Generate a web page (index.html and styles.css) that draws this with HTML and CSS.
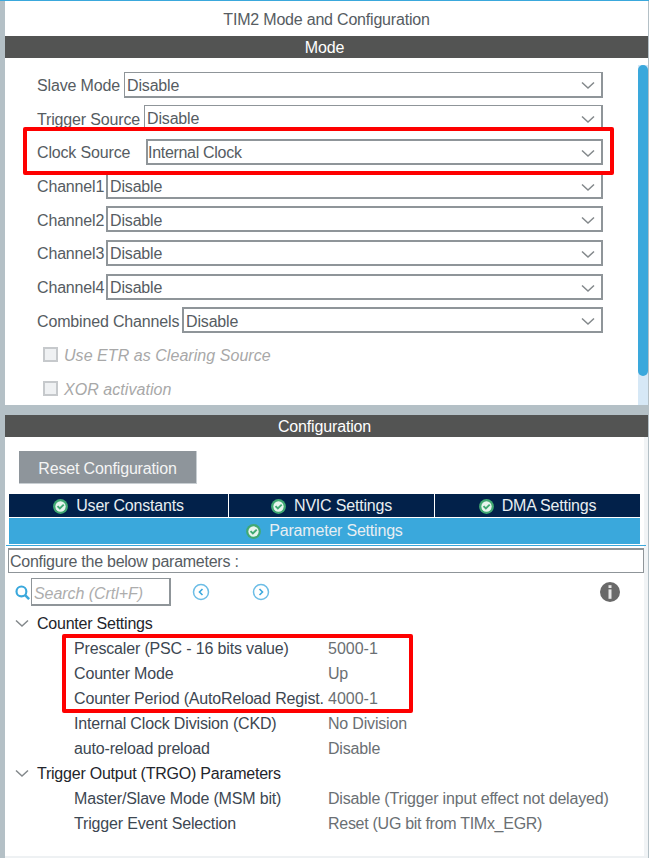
FILE: index.html
```html
<!DOCTYPE html>
<html lang="en">
<head>
    <meta charset="UTF-8">
    <meta name="viewport" content="width=device-width, initial-scale=1.0">
    <title>TIM2 Mode and Configuration</title>
    <link rel="stylesheet" href="styles.css">
</head>
<body>
    <svg class="icon-defs" width="0" height="0">
        <symbol id="chevron" viewBox="0 0 14 9">
            <polyline points="1,1.5 7,7 13,1.5" fill="none" stroke="#83888b" stroke-width="1.5"></polyline>
        </symbol>
        <symbol id="check" viewBox="0 0 14 14">
            <circle cx="7" cy="7" r="6.9" fill="#41a973"></circle>
            <circle cx="7" cy="7" r="4.8" fill="#e8f5ee"></circle>
            <polyline points="4.2,6.6 6.4,8.8 10,5.2" fill="none" stroke="#41a973" stroke-width="1.8"></polyline>
        </symbol>
    </svg>

    <div class="window">
        <!-- Mode -->
        <section class="mode-panel">
            <div class="title">TIM2 Mode and Configuration</div>
            <div class="bar">Mode</div>
            <div class="mode-body">
                <div class="mode-form">
                    <div class="field field-slave">
                        <label>Slave Mode</label>
                        <div class="select"><span>Disable</span><svg class="chevron"><use href="#chevron"></use></svg></div>
                    </div>
                    <div class="field field-trigger">
                        <label>Trigger Source</label>
                        <div class="select"><span>Disable</span><svg class="chevron"><use href="#chevron"></use></svg></div>
                    </div>
                    <div class="field field-clock">
                        <label>Clock Source</label>
                        <div class="select"><span>Internal Clock</span><svg class="chevron"><use href="#chevron"></use></svg></div>
                    </div>
                    <div class="field field-channel">
                        <label>Channel1</label>
                        <div class="select"><span>Disable</span><svg class="chevron"><use href="#chevron"></use></svg></div>
                    </div>
                    <div class="field field-channel">
                        <label>Channel2</label>
                        <div class="select"><span>Disable</span><svg class="chevron"><use href="#chevron"></use></svg></div>
                    </div>
                    <div class="field field-channel">
                        <label>Channel3</label>
                        <div class="select"><span>Disable</span><svg class="chevron"><use href="#chevron"></use></svg></div>
                    </div>
                    <div class="field field-channel">
                        <label>Channel4</label>
                        <div class="select"><span>Disable</span><svg class="chevron"><use href="#chevron"></use></svg></div>
                    </div>
                    <div class="field field-combined">
                        <label>Combined Channels</label>
                        <div class="select"><span>Disable</span><svg class="chevron"><use href="#chevron"></use></svg></div>
                    </div>
                    <div class="options">
                        <div class="option"><span class="checkbox"></span>Use ETR as Clearing Source</div>
                        <div class="option"><span class="checkbox"></span>XOR activation</div>
                    </div>
                </div>
                <div class="scrollbar"><div class="scroll-thumb"></div></div>
            </div>
        </section>

        <!-- Configuration -->
        <section class="config-panel">
            <div class="bar">Configuration</div>
            <button class="reset-btn">Reset Configuration</button>

            <div class="tabs">
                <div class="tab"><svg class="check"><use href="#check"></use></svg>User Constants</div>
                <div class="tab tab-nvic"><svg class="check"><use href="#check"></use></svg>NVIC Settings</div>
                <div class="tab tab-dma"><svg class="check"><use href="#check"></use></svg>DMA Settings</div>
                <div class="tab tab-active"><svg class="check"><use href="#check"></use></svg>Parameter Settings</div>
            </div>
            <div class="tab-rule"></div>

            <div class="hint">Configure the below parameters :</div>

            <div class="toolbar">
                <svg class="search-icon" viewBox="0 0 14 14">
                    <circle cx="6" cy="6" r="4.6" fill="none" stroke="#3aa8dc" stroke-width="2"></circle>
                    <line x1="9.2" y1="9.2" x2="13.2" y2="13.2" stroke="#3aa8dc" stroke-width="2.4"></line>
                </svg>
                <div class="search">Search (Crtl+F)</div>
                <svg class="nav-icon" viewBox="0 0 18 18">
                    <circle cx="9" cy="9" r="7.5" fill="none" stroke="#6cbde6" stroke-width="1.5"></circle>
                    <polyline points="10.5,6 7.5,9 10.5,12" fill="none" stroke="#3aa8dc" stroke-width="1.6"></polyline>
                </svg>
                <svg class="nav-icon nav-next" viewBox="0 0 18 18">
                    <circle cx="9" cy="9" r="7.5" fill="none" stroke="#6cbde6" stroke-width="1.5"></circle>
                    <polyline points="7.5,6 10.5,9 7.5,12" fill="none" stroke="#3aa8dc" stroke-width="1.6"></polyline>
                </svg>
                <svg class="info-icon" viewBox="0 0 20 20">
                    <circle cx="10" cy="10" r="10" fill="#696969"></circle>
                    <rect x="8.5" y="3.2" width="3" height="2.8" fill="#e6e6e6"></rect>
                    <rect x="8.5" y="7.4" width="3" height="9.4" fill="#e6e6e6"></rect>
                </svg>
            </div>

            <div class="tree">
                <div class="group"><svg class="chevron group-chevron"><use href="#chevron"></use></svg>Counter Settings</div>
                <div class="param"><span>Prescaler (PSC - 16 bits value)</span><span class="value value-num">5000-1</span></div>
                <div class="param"><span>Counter Mode</span><span class="value">Up</span></div>
                <div class="param"><span>Counter Period (AutoReload Regist.</span><span class="value value-num">4000-1</span></div>
                <div class="param"><span>Internal Clock Division (CKD)</span><span class="value">No Division</span></div>
                <div class="param"><span>auto-reload preload</span><span class="value">Disable</span></div>
                <div class="group"><svg class="chevron group-chevron"><use href="#chevron"></use></svg>Trigger Output (TRGO) Parameters</div>
                <div class="param"><span>Master/Slave Mode (MSM bit)</span><span class="value">Disable (Trigger input effect not delayed)</span></div>
                <div class="param"><span>Trigger Event Selection</span><span class="value value-tight">Reset (UG bit from TIMx_EGR)</span></div>
            </div>
        </section>
    </div>

    <!-- red marks drawn over the screenshot -->
    <div class="mark mark-clock"></div>
    <div class="mark mark-params"></div>
</body>
</html>
```

FILE: styles.css
```css
* {
    box-sizing: border-box;
}

html,
body {
    height: 100%;
}

body {
    margin: 0;
    background: #b4c0c6;
    font-family: "Liberation Sans", Arial, sans-serif;
    font-size: 16px;
    letter-spacing: -0.16px;
    color: #565c62;
    overflow: hidden;
    position: relative;
}

.icon-defs {
    position: absolute;
}

.window {
    border-top: 1px solid #3aa8dc;
    padding: 0 1px 0 5px;
}

.bar {
    height: 22px;
    padding-right: 4px;
    line-height: 24px;
    background: #535453;
    color: #fff;
    text-align: center;
}

/* Mode */
.mode-panel {
    height: 404px;
    background: #fff;
    display: flex;
    flex-direction: column;
}

.title {
    height: 35px;
    line-height: 37px;
    letter-spacing: -0.2px;
    text-align: center;
}

.mode-body {
    flex: 1;
    display: flex;
    min-height: 0;
}

.mode-form {
    flex: 1;
    padding: 13.5px 35px 0 32px;
}

.field {
    display: flex;
    align-items: center;
    height: 26px;
    margin-bottom: 7.7px;
}

.field label {
    flex: none;
    padding-top: 3px;
    white-space: nowrap;
}

/* 标签宽度跟着参考图走 */
.field-slave label {
    width: 87px;
}

.field-trigger label {
    width: 107px;
}

.field-clock label {
    width: 109px;
}

.field-channel label {
    width: 69px;
}

.field-combined label {
    width: 145px;
}

.select {
    flex: 1;
    height: 26px;
    border: 1px solid #8f9599;
    border-width: 1px 2px 2px 1px;
    padding: 3px 0 0 2px;
    display: flex;
    align-items: center;
    justify-content: space-between;
}

.field-clock .select,
.field-channel .select,
.field-combined .select {
    border-width: 2px;
}

.field-clock .select {
    padding-left: 0;
    letter-spacing: -0.3px;
}

.chevron {
    width: 14px;
    height: 9px;
    margin-right: 6px;
}

.options {
    margin-top: 13.6px;
}

.option {
    display: flex;
    align-items: center;
    height: 16px;
    margin-bottom: 18px;
    padding: 2px 0 0 6px;
    letter-spacing: 0.05px;
    font-style: italic;
    color: #a8a8a8;
    white-space: nowrap;
}

.checkbox {
    width: 15px;
    height: 15px;
    margin: -2px 6px 0 0;
    background: #eff1f3;
    border: 2px solid #c6c9cc;
}

.scrollbar {
    width: 10px;
    margin-top: 7px;
    background: #d6e8f6;
}

.scroll-thumb {
    height: 311px;
    background: #3aa8dc;
    border-radius: 5px;
}

/* Configuration */
.config-panel {
    margin-top: 10px;
    height: 443px;
    background: linear-gradient(to left, #f1f4f6 4px, #fff 4px);
    border-bottom: 2px solid #eef1f3;
}

.reset-btn {
    display: block;
    width: 178px;
    height: 33px;
    margin: 14px 0 10px 14px;
    background: #8e959b;
    border: none;
    border-right: 1px solid #c8ced2;
    border-bottom: 1px solid #c8ced2;
    padding: 3px 0 0;
    font: inherit;
    letter-spacing: -0.16px;
    color: #f4f4f4;
}

.tabs {
    width: 631px;
    margin-left: 4px;
    display: grid;
    grid-template-columns: 219px 206px 206px;
    grid-template-rows: 23px 26px;
    row-gap: 1px;
    letter-spacing: -0.2px;
}

.tab {
    background: #02214a;
    color: #e8eef2;
    display: flex;
    align-items: center;
    justify-content: center;
    gap: 8px;
    padding-top: 1px;
}

.tab-nvic,
.tab-dma {
    border-left: 1px solid #fff;
}

.tab-active {
    grid-column: 1 / 4;
    background: #3aa8dc;
    padding-top: 0;
}

.check {
    width: 15px;
    height: 15px;
    flex: none;
}

.tab-rule {
    width: 640px;
    height: 1px;
    margin: 1px 0 2px 1px;
    background: #3aa8dc;
}

.hint {
    width: 636px;
    height: 25px;
    margin-left: 3px;
    border: 1px solid #8f9599;
    border-top-width: 2px;
    padding-left: 1px;
    line-height: 24px;
    letter-spacing: -0.25px;
    white-space: nowrap;
    background: #fff;
}

.toolbar {
    display: flex;
    align-items: center;
    height: 28px;
    margin-top: 5px;
    padding-left: 10px;
}

.search-icon {
    width: 15px;
    height: 15px;
}

.search {
    width: 140px;
    height: 28px;
    margin-left: 1px;
    border: 2px solid #8f9599;
    border-width: 1px 2px 2px 1px;
    padding-left: 2px;
    line-height: 29px;
    letter-spacing: -0.05px;
    font-style: italic;
    color: #adadad;
    white-space: nowrap;
}

.nav-icon {
    width: 18px;
    height: 18px;
    margin-left: 21px;
}

.nav-next {
    margin-left: 42px;
}

.info-icon {
    width: 20px;
    height: 20px;
    margin-left: 330px;
}

.tree {
    margin-top: 5px;
}

.group {
    display: flex;
    align-items: center;
    height: 25px;
    padding-left: 10px;
    letter-spacing: -0.23px;
    color: #23252b;
    white-space: nowrap;
}

.group-chevron {
    margin-right: 8px;
}

.param {
    display: flex;
    height: 25px;
    line-height: 25px;
    padding-left: 69px;
    color: #3d4752;
    white-space: nowrap;
}

.param span:first-child {
    width: 254px;
    flex: none;
}

.value {
    letter-spacing: -0.18px;
    color: #6a6f73;
}

.value-num {
    letter-spacing: 0;
}

.value-tight {
    letter-spacing: -0.28px;
}

/* red marks */
.mark {
    position: absolute;
    border: 4px solid #fe0000;
    border-radius: 2px;
}

.mark-clock {
    left: 23px;
    top: 127px;
    width: 591px;
    height: 48px;
}

.mark-params {
    left: 62px;
    top: 634px;
    width: 351px;
    height: 79px;
}
```
